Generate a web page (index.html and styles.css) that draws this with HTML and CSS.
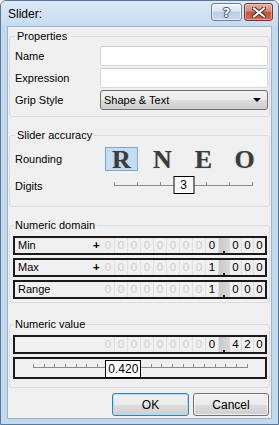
FILE: index.html
```html
<!DOCTYPE html>
<html lang="en">
<head>
    <meta charset="UTF-8" />
    <title>Slider:</title>
    <link rel="stylesheet" href="styles.css">
</head>
<body>

    <div class="window">
        <div class="titlebar">
            <span class="title">Slider:</span>
            <div class="caption">
                <button class="cap-btn help">?</button>
                <button class="cap-btn close">
                    <svg width="14" height="11" viewBox="0 0 14 11">
                        <path d="M2 1.5 L12 9.5 M12 1.5 L2 9.5" stroke="#4a2a26" stroke-width="4" stroke-linecap="square" />
                        <path d="M2 1.5 L12 9.5 M12 1.5 L2 9.5" stroke="#fff" stroke-width="2" stroke-linecap="square" />
                    </svg>
                </button>
            </div>
        </div>

        <div class="client">
            <fieldset class="group props">
                <legend>Properties</legend>
                <div class="form-grid">
                    <label>Name</label>
                    <input type="text" class="text-box" />
                    <label>Expression</label>
                    <input type="text" class="text-box" />
                    <label>Grip Style</label>
                    <div class="combo">
                        <span>Shape &amp; Text</span>
                        <i class="arrow"></i>
                    </div>
                </div>
            </fieldset>

            <fieldset class="group accuracy">
                <legend>Slider accuracy</legend>
                <div class="form-grid tall">
                    <label>Rounding</label>
                    <div class="letters">
                        <span class="letter active">R</span>
                        <span class="letter">N</span>
                        <span class="letter">E</span>
                        <span class="letter">O</span>
                    </div>
                    <label>Digits</label>
                    <div class="digits-slider">
                        <div class="track">
                            <i></i><i></i><i></i><i></i><i></i><i></i><i></i>
                        </div>
                        <span class="thumb digits-thumb">3</span>
                    </div>
                </div>
            </fieldset>

            <fieldset class="group domain">
                <legend>Numeric domain</legend>
                <div class="num-row">
                    <span class="num-label">Min</span>
                    <span class="sign">+</span>
                    <span class="cell off">0</span><span class="cell off">0</span><span class="cell off">0</span><span class="cell off">0</span><span class="cell off">0</span><span class="cell off">0</span><span class="cell off">0</span><span class="cell off">0</span><span class="cell">0</span><span class="point"></span><span class="cell frac">0</span><span class="cell frac">0</span><span class="cell frac">0</span>
                </div>
                <div class="num-row">
                    <span class="num-label">Max</span>
                    <span class="sign">+</span>
                    <span class="cell off">0</span><span class="cell off">0</span><span class="cell off">0</span><span class="cell off">0</span><span class="cell off">0</span><span class="cell off">0</span><span class="cell off">0</span><span class="cell off">0</span><span class="cell">1</span><span class="point"></span><span class="cell frac">0</span><span class="cell frac">0</span><span class="cell frac">0</span>
                </div>
                <div class="num-row">
                    <span class="num-label">Range</span>
                    <span class="cell off">0</span><span class="cell off">0</span><span class="cell off">0</span><span class="cell off">0</span><span class="cell off">0</span><span class="cell off">0</span><span class="cell off">0</span><span class="cell off">0</span><span class="cell">1</span><span class="point"></span><span class="cell frac">0</span><span class="cell frac">0</span><span class="cell frac">0</span>
                </div>
            </fieldset>

            <fieldset class="group value">
                <legend>Numeric value</legend>
                <div class="num-row">
                    <span class="num-label"></span>
                    <span class="cell off">0</span><span class="cell off">0</span><span class="cell off">0</span><span class="cell off">0</span><span class="cell off">0</span><span class="cell off">0</span><span class="cell off">0</span><span class="cell off">0</span><span class="cell">0</span><span class="point"></span><span class="cell frac">4</span><span class="cell frac">2</span><span class="cell frac">0</span>
                </div>
                <div class="num-row slider-row">
                    <div class="value-slider">
                        <div class="track">
                            <i></i><i></i><i></i><i></i><i></i><i></i><i></i><i></i><i></i><i></i><i></i>
                            <i></i><i></i><i></i><i></i><i></i><i></i><i></i><i></i><i></i><i></i>
                        </div>
                        <span class="thumb value-thumb" style="left: 42%">0.420</span>
                    </div>
                </div>
            </fieldset>

            <div class="buttons">
                <button class="btn default">OK</button>
                <button class="btn">Cancel</button>
            </div>
        </div>
    </div>

</body>
</html>
```

FILE: styles.css
```css
:root {
    --frame: #c4d8ee;
    --face: #f0f0f0;
    --group-line: #d5dfe5;
    --cell-off: #cdcdcd;
    --text: #000;
}

* {
    box-sizing: border-box;
}

body {
    margin: 0;
    padding: 0;
    font-family: Tahoma, 'Liberation Sans', sans-serif;
    font-size: 11px;
    color: var(--text);
    background: #fff;
}

.window {
    width: 279px;
    height: 425px;
    display: flex;
    flex-direction: column;
    background: var(--frame);
    border: 1px solid #5b7696;
    border-radius: 6px 6px 0 0;
}

/* title bar */
.titlebar {
    height: 25px;
    flex: none;
    display: flex;
    justify-content: space-between;
    align-items: flex-start;
    background: linear-gradient(#dde9f6, #c8dbef);
    border-radius: 5px 5px 0 0;
    padding: 0 5px 0 7px;
}

    .titlebar .title {
        font-size: 12px;
        line-height: 26px;
    }

.caption {
    display: flex;
    gap: 2px;
    padding-top: 2px;
}

.cap-btn {
    height: 18px;
    border-radius: 3px;
    padding: 0;
    display: flex;
    align-items: center;
    justify-content: center;
    cursor: pointer;
}

    .cap-btn.help {
        width: 31px;
        border: 1px solid #6e819a;
        background: linear-gradient(#edf3fa 0%, #d9e5f2 45%, #bccde2 50%, #c9d9ec 100%);
        box-shadow: inset 0 0 0 1px rgba(255,255,255,0.6);
        font: bold 13px 'DejaVu Sans', sans-serif;
        color: #fff;
        text-shadow: 1px 0 #3d4d63, -1px 0 #3d4d63, 0 1px #3d4d63, 0 -1px #3d4d63;
    }

    .cap-btn.close {
        width: 29px;
        border: 1px solid #6b3a33;
        background: linear-gradient(#e6aea3 0%, #d78a7b 45%, #c4503c 50%, #d26a52 100%);
        box-shadow: inset 0 0 0 1px rgba(255,220,210,0.5);
    }

/* client area */
.client {
    flex: 1;
    margin: 0 6px 5px;
    background: var(--face);
    border: 1px solid #9fb4cc;
    padding: 0 0 2px;
}

.group {
    margin: 0 1px;
    padding: 0 1px 0 5px;
    border: 1px solid var(--group-line);
    border-radius: 3px;
    min-width: 0;
}

    .group legend {
        padding: 0 2px;
        line-height: 13px;
        margin-left: 0;
    }

.props {
    margin-top: 3px;
    padding-top: 3px;
    padding-bottom: 6px;
}

.accuracy {
    margin-top: 12px;
    padding-top: 5px;
    padding-bottom: 8px;
}

.domain {
    margin-top: 12px;
    padding: 4px 2px 3px 3px;
}

.value {
    margin-top: 15px;
    padding: 4px 2px 8px 3px;
}

.form-grid {
    display: grid;
    grid-template-columns: 85px 1fr;
    grid-auto-rows: 20px;
    row-gap: 2px;
    align-items: center;
}

    .form-grid.tall {
        grid-auto-rows: 24px;
        row-gap: 3px;
    }

.text-box {
    height: 20px;
    width: 100%;
    margin: 0;
    border: 1px solid #d3d9e0;
    border-top-color: #c4cbd4;
    border-radius: 2px;
    background: #fff;
    outline: none;
}

.combo {
    height: 20px;
    display: flex;
    align-items: center;
    justify-content: space-between;
    padding: 0 6px 0 3px;
    border: 1px solid #707070;
    border-radius: 3px;
    background: linear-gradient(#f2f2f2 0%, #ebebeb 50%, #dddddd 50%, #cfcfcf 100%);
}

    .combo .arrow {
        width: 0;
        height: 0;
        border-left: 4px solid transparent;
        border-right: 4px solid transparent;
        border-top: 4px solid #000;
    }

/* rounding letters */
.letters {
    display: flex;
    gap: 8px;
    padding-left: 5px;
    height: 24px;
}

.letter {
    width: 33px;
    height: 24px;
    border: 1px solid transparent;
    text-align: center;
    font: bold 26px/23px 'Liberation Serif', serif;
    color: #3c3c3c;
    text-shadow: 0 0 1px #999;
}

    .letter.active {
        background: #c5dcf2;
        border-color: #7fa6cf;
    }

/* sliders */
.digits-slider,
.value-slider {
    position: relative;
    height: 24px;
}

.digits-slider {
    width: 139px;
    margin-left: 14px;
}

.track {
    position: absolute;
    left: 0;
    right: 0;
    top: 8px;
    height: 4px;
    display: flex;
    justify-content: space-between;
    align-items: flex-end;
    border-bottom: 1px solid #8c8c8c;
}

    .track i {
        width: 1px;
        height: 3px;
        background: #8c8c8c;
    }

.thumb {
    position: absolute;
    transform: translateX(-50%);
    background: #fff;
    border: 1px solid #000;
    text-align: center;
    font-family: 'Liberation Sans', sans-serif;
}

.digits-thumb {
    left: 50%;
    top: 2px;
    width: 21px;
    height: 18px;
    font-size: 12px;
    line-height: 16px;
}

.value-slider {
    width: 215px;
    height: 18px;
    margin-left: 18px;
}

    .value-slider .track {
        top: 4px;
    }

.value-thumb {
    top: 0;
    width: 36px;
    height: 18px;
    font-size: 12px;
    line-height: 16px;
}

/* numeric boxes */
.num-row {
    display: flex;
    align-items: stretch;
    height: 19px;
    border: 2px solid #1a1a1a;
    line-height: 15px;
    font-family: 'Liberation Sans', sans-serif;
    font-size: 11.5px;
}

    .num-row + .num-row {
        margin-top: 3px;
    }

.num-label {
    flex: 1;
    padding-left: 3px;
    font-family: Tahoma, 'Liberation Sans', sans-serif;
    font-size: 11px;
}

.sign {
    width: 9px;
    font-weight: bold;
    text-align: left;
}

.cell {
    width: 13px;
    text-align: center;
    border-right: 1px solid #e0e0e0;
}

    .cell.off {
        color: var(--cell-off);
    }

    .cell.frac {
        width: 12px;
        border-right: none;
        border-left: 1px solid #dcdcdc;
    }

.point {
    width: 10px;
    position: relative;
    background: linear-gradient(to right, #c8c8c8, #d8d8d8);
}

    .point::after {
        content: '';
        position: absolute;
        left: 4px;
        bottom: 0;
        width: 2px;
        height: 2px;
        background: #222;
    }

.slider-row {
    height: 22px;
    display: block;
    padding-top: 1px;
}

/* dialog buttons */
.buttons {
    display: flex;
    justify-content: flex-end;
    gap: 4px;
    margin: 5px 2px 0 0;
}

.btn {
    width: 76px;
    height: 23px;
    padding: 0;
    font-family: Tahoma, 'Liberation Sans', sans-serif;
    font-size: 12px;
    color: #000;
    border: 1px solid #707070;
    border-radius: 3px;
    background: linear-gradient(#f2f2f2 0%, #ebebeb 50%, #dddddd 50%, #cfcfcf 100%);
    box-shadow: inset 0 0 0 1px rgba(255,255,255,0.7);
    cursor: pointer;
}

    .btn.default {
        width: 77px;
        border-color: #3c7fb1;
        box-shadow: inset 0 0 0 1px #a6e0fb;
    }
```
